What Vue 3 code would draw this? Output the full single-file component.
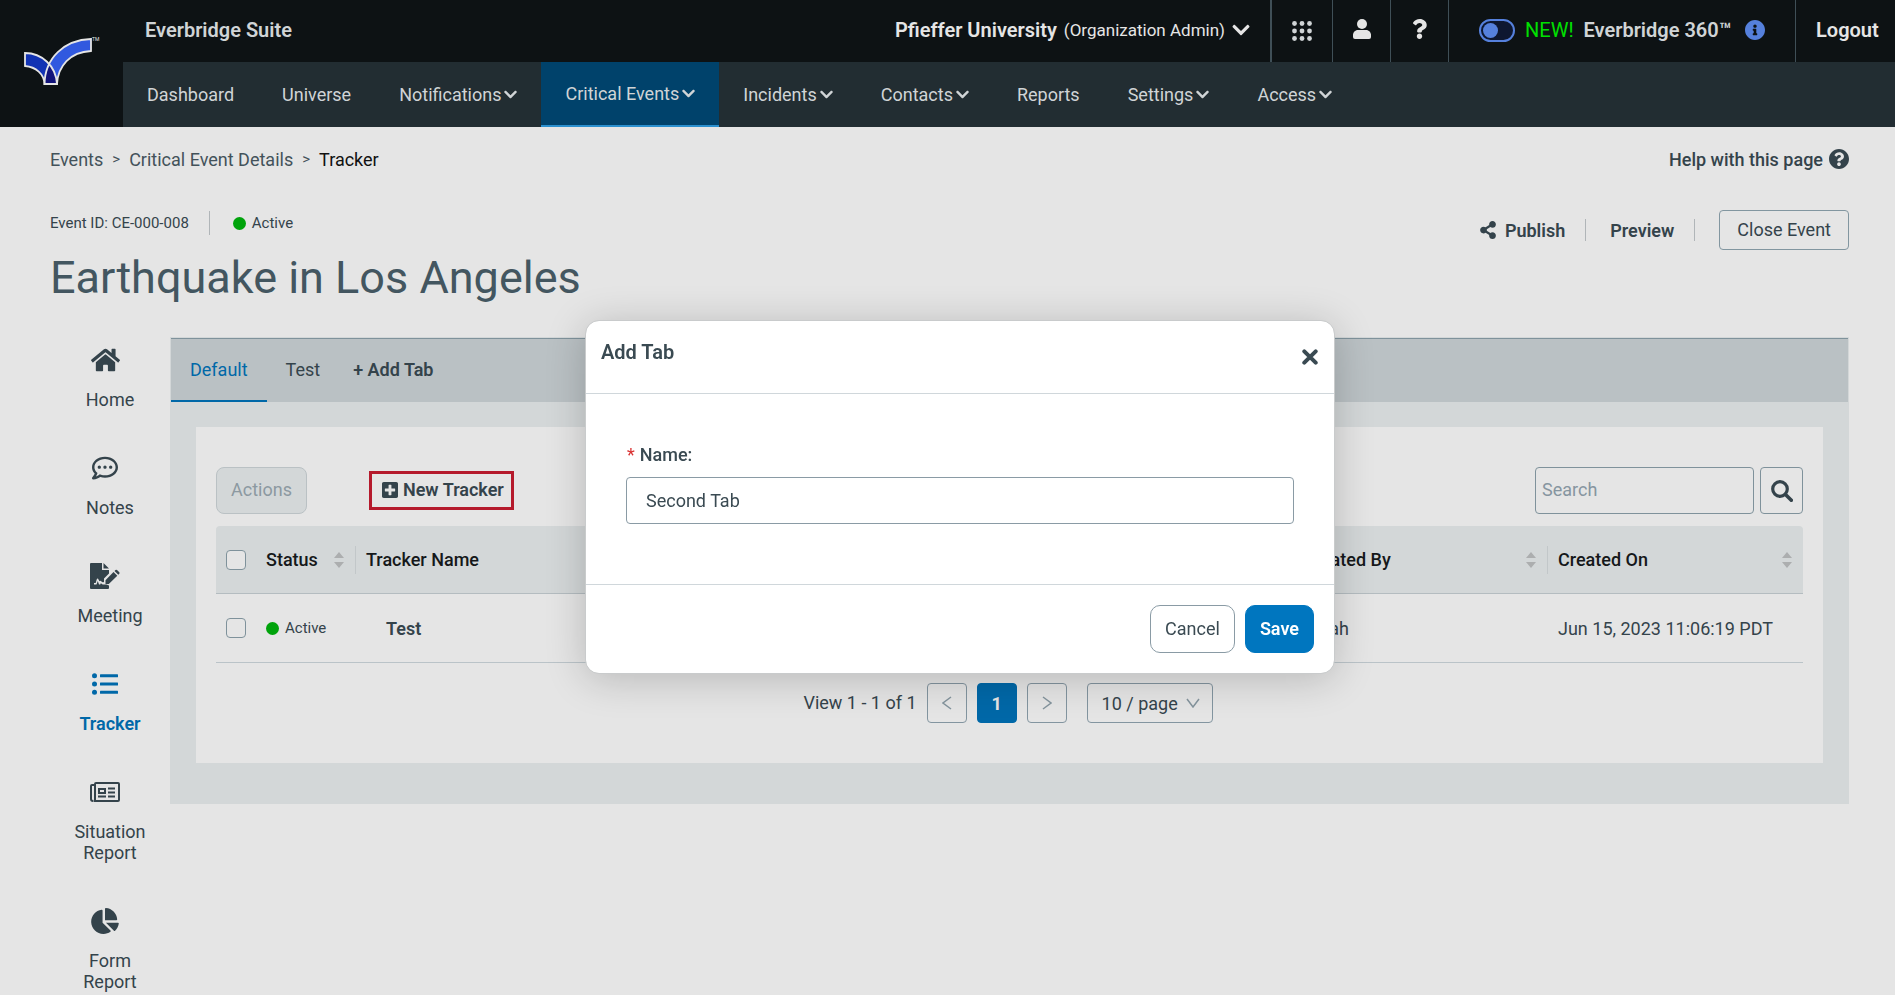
<script setup>
import { ref } from 'vue'

const chevron = 'M207.029 381.476L12.686 187.132c-9.373-9.373-9.373-24.569 0-33.941l22.667-22.667c9.357-9.357 24.522-9.375 33.901-.04L224 284.505l154.745-154.021c9.379-9.335 24.544-9.317 33.901.04l22.667 22.667c9.373 9.373 9.373 24.569 0 33.941L240.971 381.476c-9.373 9.372-24.569 9.372-33.942 0z'

const navItems = [
  { label: 'Dashboard' },
  { label: 'Universe' },
  { label: 'Notifications', menu: true },
  { label: 'Critical Events', menu: true, active: true },
  { label: 'Incidents', menu: true },
  { label: 'Contacts', menu: true },
  { label: 'Reports' },
  { label: 'Settings', menu: true },
  { label: 'Access', menu: true }
]

const sideItems = [
  { label: 'Home', icon: 'home' },
  { label: 'Notes', icon: 'notes' },
  { label: 'Meeting', icon: 'meeting' },
  { label: 'Tracker', icon: 'tracker', active: true },
  { label: 'Situation Report', icon: 'news' },
  { label: 'Form Report', icon: 'pie' }
]

const tabName = ref('Second Tab')
const search = ref('')
const pageSize = ref('10')
</script>

<template>
  <div class="page">
    <header class="header">
      <a href="#" class="logo" aria-label="Everbridge">
        <svg width="80" height="52" viewBox="22 35 80 52">
          <path d="M25 53C42 53 56 66 57 84H44.500C44 74 36 67 25 66Z" fill="#1233b4" />
          <path d="M91 39V51C70 52 58 66 57 84H44.500C45 58 64 40 91 39Z" fill="#3159df" />
          <path d="M50 65C54 71 57 77 57 84H44.500C45 77 47 70 50 65Z" fill="#11137a" />
          <g fill="none" stroke="#e5e5e5" stroke-width="1.800">
            <path d="M25 53C42 53 56 66 57 84H44.500C44 74 36 67 25 66Z" />
            <path d="M91 39V51C70 52 58 66 57 84H44.500C45 58 64 40 91 39Z" />
          </g>
          <text x="92" y="41" font-size="5" fill="#e5e5e5">TM</text>
        </svg>
      </a>
      <div class="bars">
        <div class="topbar">
          <span class="suite">Everbridge Suite</span>
          <button type="button" class="org">
            <strong>Pfieffer University</strong>
            <span>(Organization Admin)</span>
            <svg width="18" height="20" viewBox="0 0 448 512"><path :d="chevron" fill="currentColor" /></svg>
          </button>
          <button type="button" class="tool apps" aria-label="Applications">
            <svg width="20" height="20" viewBox="0 0 20 20" fill="currentColor">
              <template v-for="r in 3" :key="r">
                <circle v-for="c in 3" :key="c" :cx="c * 7.500 - 5" :cy="r * 7.500 - 5" r="2.400" />
              </template>
            </svg>
          </button>
          <button type="button" class="tool user" aria-label="Account">
            <svg width="18" height="20" viewBox="0 0 18 20" fill="currentColor">
              <circle cx="9" cy="5" r="5" />
              <path d="M5 11h8c3 0 5 2.500 5 5v2a2 2 0 0 1-2 2H2a2 2 0 0 1-2-2v-2c0-2.500 2-5 5-5z" />
            </svg>
          </button>
          <button type="button" class="tool help" aria-label="Help">
            <svg width="15" height="20" viewBox="0 0 384 512"><path fill="currentColor" d="M202.021 0C122.202 0 70.503 32.703 29.914 91.026c-7.363 10.580-5.093 25.086 5.178 32.874l43.138 32.709c10.373 7.865 25.132 6.026 33.253-4.148 25.049-31.381 43.630-49.449 82.757-49.449 30.764 0 68.816 19.799 68.816 49.631 0 22.552-18.617 34.134-48.993 51.164-35.423 19.860-82.299 44.576-82.299 106.405V320c0 13.255 10.745 24 24 24h72.471c13.255 0 24-10.745 24-24v-5.773c0-42.860 125.268-44.645 125.268-160.627C377.504 66.256 286.902 0 202.021 0zM192 373.459c-38.196 0-69.271 31.075-69.271 69.271 0 38.195 31.075 69.270 69.271 69.270s69.271-31.075 69.271-69.271-31.075-69.270-69.271-69.270z" /></svg>
          </button>
          <div class="promo">
            <label class="switch">
              <input type="checkbox" aria-label="Everbridge 360" />
            </label>
            <span class="new">NEW!</span>
            <span class="product">Everbridge 360™</span>
            <svg width="20" height="20" viewBox="8 8 496 496"><path fill="#5580dc" d="M256 8C119.043 8 8 119.083 8 256c0 136.997 111.043 248 248 248s248-111.003 248-248C504 119.083 392.957 8 256 8zm0 110c23.196 0 42 18.804 42 42s-18.804 42-42 42-42-18.804-42-42 18.804-42 42-42zm56 254c0 6.627-5.373 12-12 12h-88c-6.627 0-12-5.373-12-12v-24c0-6.627 5.373-12 12-12h12v-64h-12c-6.627 0-12-5.373-12-12v-24c0-6.627 5.373-12 12-12h64c6.627 0 12 5.373 12 12v100h12c6.627 0 12 5.373 12 12v24z" /></svg>
          </div>
          <a href="#" class="logout">Logout</a>
        </div>
        <nav class="nav">
          <a v-for="item in navItems" :key="item.label" href="#" :class="{ active: item.active }">
            {{ item.label }}
            <svg v-if="item.menu" width="13" height="15" viewBox="0 0 448 512"><path :d="chevron" fill="currentColor" /></svg>
          </a>
        </nav>
      </div>
    </header>

    <main class="main">
      <div class="crumb-row">
        <nav class="crumbs" aria-label="Breadcrumb">
          <a href="#">Events</a><span>&gt;</span>
          <a href="#">Critical Event Details</a><span>&gt;</span>
          <a href="#" class="current">Tracker</a>
        </nav>
        <a href="#" class="page-help">
          Help with this page
          <svg width="20" height="20" viewBox="8 8 496 496"><path fill="currentColor" d="M504 256c0 136.997-111.043 248-248 248S8 392.997 8 256C8 119.083 119.043 8 256 8s248 111.083 248 248zM262.655 90c-54.497 0-89.255 22.957-116.549 63.758-3.536 5.286-2.353 12.415 2.715 16.258l34.699 26.310c5.205 3.947 12.621 3.008 16.665-2.122 17.864-22.658 30.113-35.797 57.303-35.797 20.429 0 45.698 13.148 45.698 32.958 0 14.976-12.363 22.667-32.534 33.976C247.128 238.528 216 254.941 216 296v4c0 6.627 5.373 12 12 12h56c6.627 0 12-5.373 12-12v-1.333c0-28.462 83.186-29.647 83.186-106.667 0-58.002-60.165-102-116.531-102zM256 338c-25.365 0-46 20.635-46 46 0 25.364 20.635 46 46 46s46-20.636 46-46c0-25.365-20.635-46-46-46z" /></svg>
        </a>
      </div>

      <div class="event">
        <div class="event-info">
          <div class="event-meta">
            <span class="event-id">Event ID: CE-000-008</span>
            <span class="status"><i class="dot"></i>Active</span>
          </div>
          <h1>Earthquake in Los Angeles</h1>
        </div>
        <div class="event-actions">
          <button type="button" class="text-button">
            <svg width="16" height="18" viewBox="0 0 448 512"><path fill="currentColor" d="M352 320c-22.608 0-43.387 7.819-59.790 20.895l-102.486-64.054a96.551 96.551 0 0 0 0-41.683l102.486-64.054C308.613 184.181 329.392 192 352 192c53.019 0 96-42.981 96-96S405.019 0 352 0s-96 42.981-96 96c0 7.158.790 14.130 2.276 20.841L155.790 180.895C139.387 167.819 118.608 160 96 160c-53.019 0-96 42.981-96 96s42.981 96 96 96c22.608 0 43.387-7.819 59.790-20.895l102.486 64.054A96.301 96.301 0 0 0 256 416c0 53.019 42.981 96 96 96s96-42.981 96-96-42.981-96-96-96z" /></svg>
            Publish
          </button>
          <button type="button" class="text-button">Preview</button>
          <button type="button" class="close-event">Close Event</button>
        </div>
      </div>

      <div class="body">
        <nav class="side" aria-label="Event sections">
          <a v-for="item in sideItems" :key="item.label" href="#" :class="{ active: item.active }">
            <svg v-if="item.icon === 'home'" width="29" height="26" viewBox="0 0 576 512"><path fill="currentColor" d="M280.370 148.260L96 300.110V464a16 16 0 0 0 16 16l112.060-.290a16 16 0 0 0 15.920-16V368a16 16 0 0 1 16-16h64a16 16 0 0 1 16 16v95.640a16 16 0 0 0 16 16.050L464 480a16 16 0 0 0 16-16V300L295.670 148.260a12.190 12.190 0 0 0-15.300 0zM571.600 251.470L488 182.560V44.050a12 12 0 0 0-12-12h-56a12 12 0 0 0-12 12v72.610L318.470 43a48 48 0 0 0-61 0L4.340 251.470a12 12 0 0 0-1.600 16.900l25.500 31A12 12 0 0 0 45.150 301l235.220-193.740a12.190 12.190 0 0 1 15.300 0L530.900 301a12 12 0 0 0 16.900-1.600l25.500-31a12 12 0 0 0-1.700-16.930z" /></svg>
            <svg v-else-if="item.icon === 'notes'" width="26" height="26" viewBox="0 0 512 512"><path fill="currentColor" d="M144 208c-17.700 0-32 14.300-32 32s14.300 32 32 32 32-14.300 32-32-14.300-32-32-32zm112 0c-17.700 0-32 14.300-32 32s14.300 32 32 32 32-14.300 32-32-14.300-32-32-32zm112 0c-17.700 0-32 14.300-32 32s14.300 32 32 32 32-14.300 32-32-14.300-32-32-32zM256 32C114.600 32 0 125.100 0 240c0 47.600 19.900 91.200 52.900 126.300C38 405.700 7 439.100 6.500 439.500c-6.600 7-8.400 17.200-4.600 26S14.400 480 24 480c61.500 0 110-25.700 139.100-46.300C192 442.800 223.200 448 256 448c141.400 0 256-93.100 256-208S397.400 32 256 32zm0 368c-26.700 0-53.100-4.100-78.400-12.100l-22.700-7.200-19.500 13.800c-14.300 10.100-33.900 21.400-57.500 29 7.300-12.100 14.400-25.700 19.900-40.200l10.600-28.100-20.600-21.800C69.700 314.100 48 282.200 48 240c0-88.200 93.300-160 208-160s208 71.800 208 160-93.300 160-208 160z" /></svg>
            <svg v-else-if="item.icon === 'meeting'" width="30" height="26" viewBox="0 0 30 26">
              <path fill="currentColor" d="M1 0H12V7H19V10.500L14 15.500V19C12.500 19.500 12 19 11.500 18.500C10.800 17.500 10 17.500 9.500 18.300L8.500 16.500C8 15.300 7 15.300 6.700 16.500L5.700 20H4V21.500H6.500L7.800 18L9 21.500H10.200L11 20C11.500 21.500 12.500 21.500 14 21.500H16.500L19 22.500V25Q19 26 18 26H1Q0 26 0 25V1Q0 0 1 0ZM13.500 0L19 5.500H13.500Z" />
              <path fill="currentColor" d="M23.500 9L27.300 12.800L18.800 21H15.500V17.200ZM24.500 8L25.500 7Q26.300 6.500 27 7L29.300 9.300Q29.900 10 29.300 10.800L28.300 11.800Z" />
            </svg>
            <svg v-else-if="item.icon === 'tracker'" width="26" height="26" viewBox="0 0 26 26" fill="currentColor">
              <template v-for="n in 3" :key="n">
                <circle cx="2.500" :cy="n * 8.200 - 3.400" r="2.500" />
                <rect x="8" :y="n * 8.200 - 4.900" width="18" height="3" rx="0.500" />
              </template>
            </svg>
            <svg v-else-if="item.icon === 'news'" width="30" height="26" viewBox="0 0 30 26" fill="none" stroke="currentColor" stroke-width="2">
              <path d="M5 5V20.500Q5 22 3.500 22H28Q29 22 29 21V5Q29 4 28 4H6Q5 4 5 5ZM5 6H2Q1 6 1 7V20Q1 22 3 22" />
              <path d="M9 10H15V14H9ZM8 17.500H16M18 9.500H25M18 13.500H25M18 17.500H25" />
            </svg>
            <svg v-else width="28" height="26" viewBox="0 0 544 512"><path fill="currentColor" d="M527.790 288H290.500l158.030 158.030c6.040 6.040 15.980 6.530 22.190.680 38.700-36.460 65.320-85.610 73.130-140.860 1.340-9.460-6.510-17.850-16.060-17.850zm-15.830-64.800C503.720 103.740 408.260 8.280 288.800.040 279.680-.590 272 7.100 272 16.240V240h223.770c9.140 0 16.820-7.680 16.190-16.800zM224 288V50.710c0-9.550-8.390-17.400-17.840-16.060C86.990 51.490-4.100 155.600.140 280.370 4.500 408.510 114.830 513.590 243.030 511.980c50.400-.630 96.970-16.870 135.260-44.030 7.900-5.600 8.420-17.230 1.570-24.080L224 288z" /></svg>
            <span>{{ item.label }}</span>
          </a>
        </nav>

        <section class="panel">
          <div class="tabs">
            <a href="#" class="active">Default</a>
            <a href="#">Test</a>
            <button type="button">+ Add Tab</button>
          </div>
          <div class="card">
            <div class="toolbar">
              <button type="button" class="actions" disabled>Actions</button>
              <button type="button" class="new-tracker">
                <svg width="16" height="16" viewBox="0 32 448 448"><path fill="currentColor" d="M400 32H48C21.500 32 0 53.500 0 80v352c0 26.500 21.500 48 48 48h352c26.500 0 48-21.500 48-48V80c0-26.500-21.500-48-48-48zm-32 252c0 6.600-5.400 12-12 12h-92v92c0 6.600-5.400 12-12 12h-56c-6.600 0-12-5.400-12-12v-92H92c-6.600 0-12-5.400-12-12v-56c0-6.600 5.400-12 12-12h92v-92c0-6.600 5.400-12 12-12h56c6.600 0 12 5.400 12 12v92h92c6.600 0 12 5.400 12 12v56z" /></svg>
                New Tracker
              </button>
              <form class="search" @submit.prevent>
                <input v-model="search" type="text" placeholder="Search" aria-label="Search" />
                <button type="submit" aria-label="Run search">
                  <svg width="22" height="22" viewBox="0 0 22 22" fill="none" stroke="currentColor">
                    <circle cx="9" cy="9" r="7.300" stroke-width="3.200" />
                    <path d="M14.500 14.500L20.300 20.300" stroke-width="3.600" stroke-linecap="round" />
                  </svg>
                </button>
              </form>
            </div>

            <table>
              <colgroup>
                <col class="col-check" /><col class="col-status" /><col /><col class="col-created" /><col class="col-created" />
              </colgroup>
              <thead>
                <tr>
                  <th><input type="checkbox" aria-label="Select all" /></th>
                  <th v-for="name in ['Status', 'Tracker Name', 'Created By', 'Created On']" :key="name">
                    <div class="th">
                      {{ name }}
                      <svg width="10" height="16" viewBox="0 0 10 16"><path d="M5 0L10 6H0ZM5 16L0 10H10Z" fill="#acaeaf" /></svg>
                    </div>
                  </th>
                </tr>
              </thead>
              <tbody>
                <tr>
                  <td><input type="checkbox" aria-label="Select Test" /></td>
                  <td><span class="status"><i class="dot"></i>Active</span></td>
                  <td class="name">Test</td>
                  <td>Sarah</td>
                  <td>Jun 15, 2023 11:06:19 PDT</td>
                </tr>
              </tbody>
            </table>

            <div class="pager">
              <span>View 1 - 1 of 1</span>
              <button type="button" aria-label="Previous page">
                <svg width="10" height="14" viewBox="0 0 10 14"><path d="M9 1L1 7L9 13" /></svg>
              </button>
              <button type="button" class="current">1</button>
              <button type="button" aria-label="Next page">
                <svg width="10" height="14" viewBox="0 0 10 14"><path d="M1 1L9 7L1 13" /></svg>
              </button>
              <div class="size">
                <select v-model="pageSize" aria-label="Rows per page">
                  <option value="10">10 / page</option>
                  <option value="20">20 / page</option>
                </select>
                <svg width="14" height="10" viewBox="0 0 14 10"><path d="M1 1L7 9L13 1" /></svg>
              </div>
            </div>
          </div>
        </section>
      </div>
    </main>

    <div class="overlay">
      <form class="modal" role="dialog" aria-labelledby="modal-title" @submit.prevent>
        <div class="modal-head">
          <h2 id="modal-title">Add Tab</h2>
          <button type="button" aria-label="Close">
            <svg width="16" height="16" viewBox="0 0 16 16"><path d="M2.300 2.300L13.700 13.700M13.700 2.300L2.300 13.700" stroke="currentColor" stroke-width="4" stroke-linecap="round" /></svg>
          </button>
        </div>
        <div class="modal-body">
          <label for="tab-name"><span>*</span>Name:</label>
          <input id="tab-name" v-model="tabName" type="text" />
        </div>
        <div class="modal-foot">
          <button type="button" class="cancel">Cancel</button>
          <button type="submit" class="save">Save</button>
        </div>
      </form>
    </div>
  </div>
</template>

<style>
body {
  background: #e5e5e5;
}
</style>

<style scoped>
.page {
  min-height: 100vh;
  font-family: Roboto, "Liberation Sans", sans-serif;
  font-size: 18px;
  color: #34434b;
}
.page *,
.page *::before,
.page *::after {
  box-sizing: border-box;
}
a {
  color: inherit;
  text-decoration: none;
}
button,
input,
select {
  font: inherit;
  color: inherit;
}
button {
  padding: 0;
  border: 0;
  background: none;
  display: flex;
  align-items: center;
  justify-content: center;
  white-space: nowrap;
}
svg {
  flex: none;
  display: block;
}

/* Header */
.header {
  display: flex;
  background: #0d1214;
  color: #d0d4d6;
}
.logo {
  width: 123px;
  padding: 35px 0 0 22px;
}
.bars {
  flex: 1;
}
.topbar {
  display: flex;
  align-items: stretch;
  height: 62px;
}
.topbar > * {
  display: flex;
  align-items: center;
  padding-bottom: 2px;
}
.topbar .suite {
  padding-left: 22px;
  margin-right: auto;
  font-size: 20px;
  font-weight: 600;
}
.org {
  gap: 7px;
  padding-right: 20px;
  font-size: 17px;
  color: #e5e5e5;
}
.org strong {
  font-size: 20px;
  font-weight: 600;
}
.topbar .tool {
  width: 58px;
  padding-bottom: 5px;
  border-left: 1px solid #3f4f57;
  color: #e5e5e5;
}
.topbar .apps {
  width: 62px;
  padding-bottom: 0;
  border-left-width: 2px;
  color: #d0d4d6;
}
.promo {
  width: 347px;
  padding-left: 30px;
  border-left: 1px solid #3f4f57;
  font-size: 20px;
}
.switch {
  display: flex;
  margin-right: 10px;
}
.switch input {
  appearance: none;
  width: 36px;
  height: 23px;
  margin: 0;
  padding: 2px;
  border: 2px solid #5580dc;
  border-radius: 12px;
  background: #0e1730;
}
.switch input::before {
  content: "";
  display: block;
  width: 15px;
  height: 15px;
  border-radius: 50%;
  background: #5580dc;
}
.new {
  margin-right: 10px;
  color: #00e000;
}
.product {
  margin-right: 14px;
  font-weight: 600;
}
.logout {
  width: 100px;
  padding-left: 20px;
  border-left: 1px solid #3f4f57;
  font-size: 20px;
  font-weight: 600;
  color: #e5e5e5;
}
.nav {
  display: flex;
  height: 65px;
  background: #222d32;
}
.nav a {
  display: flex;
  align-items: center;
  gap: 3px;
  padding: 0 24px;
}
.nav a.active {
  background: #00426b;
  border-bottom: 2px solid #2b90cf;
}

/* Page head */
.main {
  padding: 0 46px 0 50px;
}
.crumb-row {
  display: flex;
  align-items: center;
  justify-content: space-between;
  height: 64px;
}
.crumbs {
  display: flex;
  align-items: center;
  gap: 9px;
  color: #43525a;
}
.crumbs span {
  font-size: 15px;
}
.crumbs .current {
  color: #111;
}
.page-help {
  display: flex;
  align-items: center;
  gap: 6px;
  font-weight: 500;
}
.event {
  display: flex;
  align-items: flex-start;
  justify-content: space-between;
  padding-top: 19px;
}
.event-meta {
  display: flex;
  align-items: center;
  height: 26px;
  font-size: 15px;
}
.event-id {
  line-height: 24px;
  padding-right: 20px;
  margin-right: 23px;
  border-right: 1px solid #b0b5b8;
}
.status {
  display: flex;
  align-items: center;
  gap: 6px;
  font-size: 15px;
}
.dot {
  width: 13px;
  height: 13px;
  border-radius: 50%;
  background: #00a30b;
}
h1 {
  margin: 15px 0 32px;
  font-size: 45px;
  line-height: 54px;
  font-weight: 400;
  color: #435660;
}
.event-actions {
  display: flex;
  align-items: center;
}
.text-button {
  gap: 9px;
  height: 22px;
  padding-right: 20px;
  margin-right: 24px;
  border-right: 1px solid #b0b5b8;
  font-weight: 600;
}
.close-event {
  height: 40px;
  padding: 0 17px 2px;
  border: 1px solid #8296a0;
  border-radius: 4px;
}

/* Side navigation */
.body {
  display: flex;
  align-items: flex-start;
}
.side {
  width: 120px;
  flex: none;
}
.side a {
  display: flex;
  flex-direction: column;
  align-items: center;
  padding: 10px 20px 35px;
  line-height: 21px;
  text-align: center;
}
.side a:last-child {
  padding-bottom: 0;
}
.side svg {
  margin: 0 10px 16px 0;
}
.side .active {
  color: #0068a8;
  font-weight: 600;
}

/* Panel */
.panel {
  flex: 1;
  min-width: 0;
  padding: 1px 1px 41px;
  background: #d3d7d8;
}
.tabs {
  display: flex;
  height: 64px;
  background: #bac1c4;
  border-top: 1px solid #7f929b;
}
.tabs a {
  display: flex;
  align-items: center;
  padding: 0 19px;
  border-bottom: 2px solid transparent;
}
.tabs .active {
  color: #0068a8;
  border-color: #0068a8;
}
.tabs button {
  padding: 0 14px 2px;
  font-weight: 600;
}
.card {
  margin: 25px 25px 0;
  padding: 40px 20px;
  background: #e5e5e5;
}
.toolbar {
  display: flex;
  align-items: center;
  margin-bottom: 12px;
}
.actions {
  height: 47px;
  padding: 0 14px 2px;
  margin-right: 62px;
  border: 1px solid #bac1c4;
  border-radius: 8px;
  background: #d3d7d8;
  color: #8c99a1;
}
.new-tracker {
  gap: 5px;
  height: 39px;
  padding: 0 7px 2px 10px;
  border: 3px solid #b51a2c;
  font-weight: 600;
}
.search {
  display: flex;
  gap: 6px;
  margin-left: auto;
}
.search input {
  width: 219px;
  height: 47px;
  padding: 0 6px 2px;
  border: 1px solid #7f929b;
  border-radius: 4px;
  background: transparent;
}
.search input::placeholder {
  color: #8695a0;
  opacity: 1;
}
.search button {
  width: 43px;
  border: 1px solid #7f929b;
  border-radius: 4px;
}
table {
  width: 100%;
  table-layout: fixed;
  border-collapse: separate;
  border-spacing: 0;
}
.col-check {
  width: 40px;
}
.col-status {
  width: 100px;
}
.col-created {
  width: 255px;
}
th,
td {
  padding: 0 10px;
  border-bottom: 1px solid #bac3c8;
  text-align: left;
}
th {
  height: 68px;
  background: #d3d7d8;
  border-color: #b4bcc0;
  font-weight: 500;
  color: #15181a;
}
th:first-child {
  border-top-left-radius: 4px;
}
th:last-child {
  border-top-right-radius: 4px;
}
.th {
  display: flex;
  align-items: center;
  justify-content: space-between;
  height: 28px;
  margin-right: -10px;
  padding-right: 11px;
  border-right: 1px solid #c2c7c9;
}
th:last-child .th {
  border-right: 0;
}
td {
  height: 69px;
}
td.name {
  padding-left: 30px;
  font-weight: 600;
}
table input {
  appearance: none;
  display: block;
  width: 20px;
  height: 20px;
  margin: 0;
  border: 1px solid #7f929b;
  border-radius: 4px;
  background: #e5e5e5;
}
.pager {
  display: flex;
  align-items: center;
  justify-content: center;
  gap: 10px;
  margin-top: 20px;
  padding-right: 3px;
}
.pager span {
  padding-bottom: 2px;
}
.pager button {
  width: 40px;
  height: 40px;
  border: 1px solid #8395a0;
  border-radius: 4px;
}
.pager svg {
  fill: none;
  stroke: #84949d;
  stroke-width: 1.500;
}
.pager .current {
  border-color: #0068a8;
  background: #0068a8;
  color: #e5e5e5;
  font-weight: 700;
}
.size {
  display: grid;
  align-items: center;
  margin-left: 10px;
}
.size > * {
  grid-area: 1 / 1;
}
.size select {
  appearance: none;
  width: 126px;
  height: 40px;
  padding: 0 14px;
  border: 1px solid #8395a0;
  border-radius: 4px;
  background: transparent;
}
.size svg {
  justify-self: end;
  margin-right: 13px;
  pointer-events: none;
}

/* Dialog */
.overlay {
  position: fixed;
  inset: 0;
  display: flex;
  align-items: flex-start;
  justify-content: center;
  padding: 320px 0 0 25px;
}
.modal {
  width: 750px;
  border: 1px solid #c9cbcc;
  border-radius: 14px;
  background: #fff;
  background-clip: padding-box;
  box-shadow: 0 5px 40px rgba(0, 0, 0, 0.2);
  color: #3a4a52;
}
.modal-head {
  display: flex;
  justify-content: space-between;
  height: 73px;
  padding: 19px 16px 0 15px;
  border-bottom: 1px solid #d0d7db;
}
.modal-head h2 {
  margin: 0;
  font-size: 20px;
  line-height: 24px;
  font-weight: 600;
}
.modal-head button {
  height: 16px;
  margin-top: 9px;
}
.modal-body {
  padding: 50px 40px 60px;
  border-bottom: 1px solid #d0d7db;
}
.modal-body label {
  display: block;
  padding-left: 1px;
  margin-bottom: 12px;
  line-height: 21px;
  font-weight: 500;
}
.modal-body label span {
  margin-right: 5px;
  color: #d93030;
  font-weight: 400;
}
.modal-body input {
  display: block;
  width: 100%;
  height: 47px;
  padding: 0 19px;
  border: 1px solid #8a9ba5;
  border-radius: 4px;
  background: #fff;
}
.modal-foot {
  display: flex;
  justify-content: flex-end;
  gap: 10px;
  padding: 20px;
}
.modal-foot button {
  height: 48px;
  padding: 0 14px 2px;
  border: 1px solid #8a9ba5;
  border-radius: 10px;
}
.modal-foot .save {
  border-color: #0076bf;
  background: #0076bf;
  color: #fff;
  font-weight: 600;
}
</style>
